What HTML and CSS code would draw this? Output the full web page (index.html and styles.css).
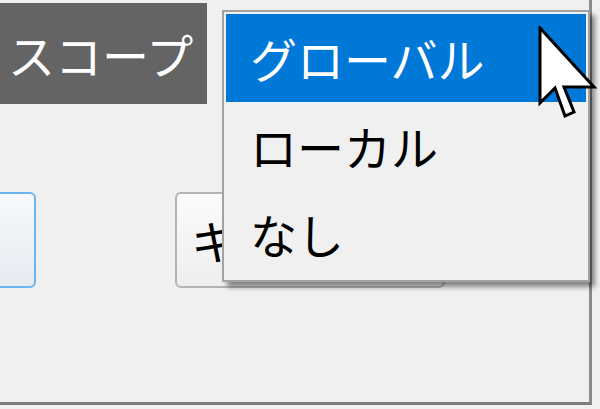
FILE: index.html
```html
<!DOCTYPE html>
<html lang="ja">
<head>
  <meta charset="UTF-8" />
  <title>スコープ</title>
  <link rel="stylesheet" href="styles.css">
</head>
<body>
  <div class="frame">
    <!-- Scope label -->
    <div class="label-row">
      <span class="scope-label">スコープ</span>
    </div>

    <!-- Buttons under the dropdown -->
    <div class="button-row">
      <div class="btn btn-focused"></div>
      <div class="btn btn-combo">キ</div>
    </div>

    <!-- Open dropdown list -->
    <ul class="dropdown">
      <li class="dropdown-item selected">グローバル</li>
      <li class="dropdown-item">ローカル</li>
      <li class="dropdown-item">なし</li>
    </ul>

    <!-- Mouse pointer -->
    <svg class="cursor" viewBox="0 0 62 94" width="62" height="94" xmlns="http://www.w3.org/2000/svg">
      <path d="M2 2 L2 77 L17 62 L27 90 L36 86 L26 61 L56 61 Z" fill="#fff" stroke="#000" stroke-width="3" stroke-linejoin="miter"/>
    </svg>
  </div>
</body>
</html>
```

FILE: styles.css
```css
/* Reset default styling */
* {
  margin: 0;
  padding: 0;
  box-sizing: border-box;
}

body {
  font-family: "Noto Sans CJK JP", "Noto Sans", sans-serif;
  background: #f0f0f0;
  color: #000;
  overflow: hidden;
}

/* Panel outline (right and bottom edges visible) */
.frame {
  position: relative;
  width: 592px;
  height: 405px;
  border-right: 3px solid #8a8a8a;
  border-bottom: 3px solid #7c7c7c;
  box-shadow: 0 3px 0 #b6b6b6;
}

.label-row {
  padding-top: 3px;
}

.scope-label {
  display: block;
  width: 207px;
  height: 101px;
  background: #646464;
  color: #fff;
  font-size: 47px;
  line-height: 101px;
  padding-left: 8px;
  white-space: nowrap;
}

.button-row {
  display: flex;
  gap: 139px;
  margin-top: 88px;
}

.btn {
  height: 96px;
  border-radius: 6px;
  font-size: 47px;
  line-height: 92px;
  white-space: nowrap;
}

.btn-focused {
  width: 130px;
  margin-left: -94px;
  border: 2px solid #6db5f0;
  background: linear-gradient(#f7f9fb, #e6ebf0);
}

.btn-combo {
  width: 270px;
  border: 2px solid #b4b4b4;
  background: linear-gradient(#fbfbfb, #eeeeee);
  padding-left: 14px;
}

/* Dropdown popup */
.dropdown {
  position: absolute;
  left: 222px;
  top: 10px;
  width: 368px;
  list-style: none;
  background: #f0f0f0;
  border: 2px solid #a2a2a2;
  padding: 2px;
  box-shadow: 5px 5px 5px rgba(0, 0, 0, 0.45);
}

.dropdown-item {
  height: 88px;
  font-size: 47px;
  line-height: 88px;
  padding-left: 24px;
  white-space: nowrap;
}

.dropdown-item.selected {
  background: #0078d7;
  color: #fff;
}

.cursor {
  position: absolute;
  left: 538px;
  top: 26px;
}
```
